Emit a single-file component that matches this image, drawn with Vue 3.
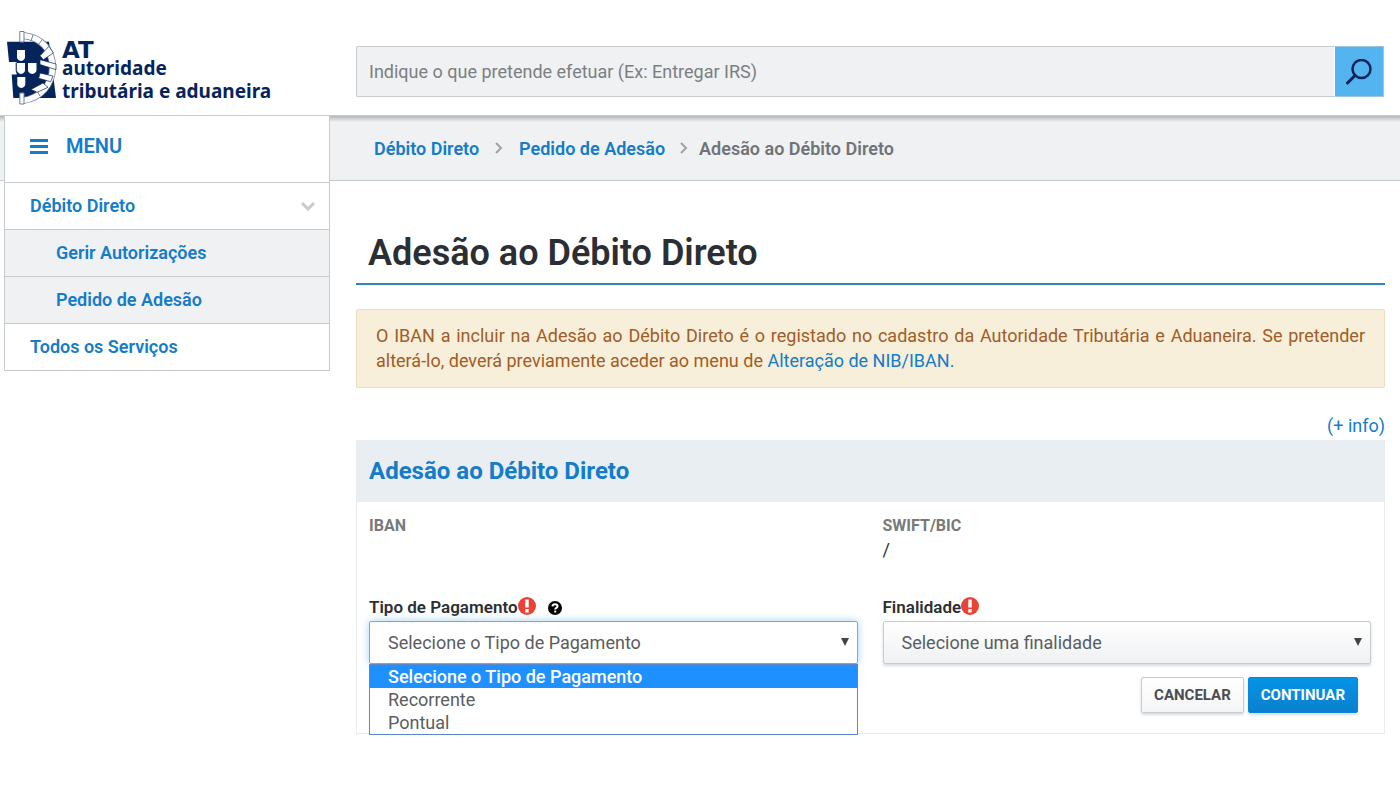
<script setup>
import { ref } from 'vue'

const query = ref('')
const paymentTypes = ['Selecione o Tipo de Pagamento', 'Recorrente', 'Pontual']
const paymentType = ref(paymentTypes[0])
const purpose = ref('Selecione uma finalidade')
const open = ref(true)

function choose(option) {
  paymentType.value = option
  open.value = false
}
</script>

<template>
  <div class="page">
    <header class="top">
      <a class="logo" href="#" aria-label="AT autoridade tributária e aduaneira">
        <svg class="emblem" viewBox="0 0 50 74" aria-hidden="true">
          <path d="M0 10.700H42L49 67H6.300L4.700 43.600H9.700V31H2Z" fill="#06245c" />
          <path d="M16 4.500C34 6 45.500 19 45.500 36S34 67 16 69.500" fill="none" stroke="#6f7fa3" stroke-width="7" />
          <path d="M16 4.500C34 6 45.500 19 45.500 36S34 67 16 69.500" fill="none" stroke="#fff" stroke-width="5.500" />
          <path d="M26 4L24 10M35 9L31 14M33 65L30 60" stroke="#6f7fa3" stroke-width="1" />
          <path d="M33 24.700L42 15.300L46.300 22L36.300 28.700ZM33 28.700L49 33V38.700L33 33.500ZM33 42L46 45L43.700 50.700L31.700 47.300ZM24 58.500L36 52L41 56.300L30 61.300Z" fill="#fff" stroke="#06245c" stroke-width="0.700" />
          <path d="M12.800 0.500H17V11H12.800ZM12.800 62H17V73H12.800Z" fill="#fff" stroke="#6f7fa3" stroke-width="1" />
          <path d="M10 19H18V26Q18 29 14 30Q10 29 10 26ZM10 32H18V39Q18 42 14 43Q10 42 10 39ZM21 32H29.500V39Q29.500 42 25.200 43Q21 42 21 39ZM10.300 46H18.300V53Q18.300 56 14.300 57Q10.300 56 10.300 53Z" fill="#fff" />
          <path d="M9.200 31.500V40Q9.500 43 13 44" fill="none" stroke="#06245c" stroke-width="1" />
        </svg>
        <span class="logo-text">
          <span class="logo-at">AT</span>
          <span>autoridade</span>
          <span class="logo-last">tributária e aduaneira</span>
        </span>
      </a>
      <form class="search" role="search" @submit.prevent>
        <input v-model="query" type="text" aria-label="Pesquisa" placeholder="Indique o que pretende efetuar (Ex: Entregar IRS)" />
        <button type="submit" aria-label="Pesquisar">
          <svg viewBox="0 0 26 26" aria-hidden="true">
            <circle cx="15.500" cy="10" r="9" fill="none" stroke="#06245c" stroke-width="2.500" />
            <path d="M9 16.500L1.500 24" stroke="#06245c" stroke-width="3" stroke-linecap="round" />
          </svg>
        </button>
      </form>
    </header>

    <div class="body">
      <div class="band">
        <nav class="crumbs" aria-label="Localização">
          <a href="#">Débito Direto</a>
          <svg viewBox="0 0 8 12" aria-hidden="true"><path d="M1 1L6 6L1 11" /></svg>
          <a href="#">Pedido de Adesão</a>
          <svg class="last" viewBox="0 0 8 12" aria-hidden="true"><path d="M1 1L6 6L1 11" /></svg>
          <span>Adesão ao Débito Direto</span>
        </nav>
      </div>

      <nav class="menu" aria-label="Menu">
        <button class="menu-head" type="button">
          <svg viewBox="0 0 18 16" aria-hidden="true"><path d="M0 1.500H18M0 7.500H18M0 13.500H18" stroke="#147cc8" stroke-width="3" /></svg>
          MENU
        </button>
        <a class="item" href="#">
          Débito Direto
          <svg viewBox="0 0 14 10" aria-hidden="true"><path d="M1 2L7 8L13 2" fill="none" stroke="#c6cbcd" stroke-width="3" /></svg>
        </a>
        <a class="item sub" href="#">Gerir Autorizações</a>
        <a class="item sub" href="#">Pedido de Adesão</a>
        <a class="item" href="#">Todos os Serviços</a>
      </nav>

      <main class="main">
        <h1>Adesão ao Débito Direto</h1>
        <p class="notice">
          O IBAN a incluir na Adesão ao Débito Direto é o registado no cadastro da Autoridade Tributária e Aduaneira. Se pretender alterá-lo, deverá previamente aceder ao menu de <a href="#">Alteração de NIB/IBAN.</a>
        </p>
        <a class="info" href="#">(+ info)</a>

        <form class="card" @submit.prevent>
          <h2>Adesão ao Débito Direto</h2>
          <div class="fields">
            <div class="fact"><span class="fact-name">IBAN</span></div>
            <div class="fact"><span class="fact-name">SWIFT/BIC</span><span>/</span></div>

            <div class="field">
              <div class="label-row">
                <label for="payment">Tipo de Pagamento</label>
                <svg class="required" viewBox="0 0 18 18" aria-hidden="true">
                  <circle cx="9" cy="9" r="9" fill="#ea4335" />
                  <path d="M7.300 2.500H10.700V10.500H7.300ZM7.300 12H10.700V15.500H7.300Z" fill="#fff" />
                </svg>
                <svg class="help" viewBox="0 0 14 14" aria-hidden="true">
                  <circle cx="7" cy="7" r="7" fill="#000" />
                  <path d="M4.500 5.300Q4.800 3.300 7 3.300Q9.500 3.300 9.500 5.300Q9.500 6.400 8.300 7Q7.200 7.500 7.200 8.600" fill="none" stroke="#fff" stroke-width="2" />
                  <path d="M6.200 9.600H8.200V11.500H6.200Z" fill="#fff" />
                </svg>
              </div>
              <div class="select-box">
                <select id="payment" v-model="paymentType" class="focused" @mousedown.prevent="open = !open">
                  <option v-for="o in paymentTypes" :key="o">{{ o }}</option>
                </select>
                <svg class="arrow" viewBox="0 0 8 8" aria-hidden="true"><path d="M0 0H8L4 8Z" fill="#444" /></svg>
                <ul v-if="open" class="options" role="listbox" aria-label="Tipo de Pagamento">
                  <li v-for="o in paymentTypes" :key="o" role="option" :aria-selected="o === paymentType" @click="choose(o)">{{ o }}</li>
                </ul>
              </div>
            </div>

            <div class="field">
              <div class="label-row">
                <label for="purpose">Finalidade</label>
                <svg class="required" viewBox="0 0 18 18" aria-hidden="true">
                  <circle cx="9" cy="9" r="9" fill="#ea4335" />
                  <path d="M7.300 2.500H10.700V10.500H7.300ZM7.300 12H10.700V15.500H7.300Z" fill="#fff" />
                </svg>
              </div>
              <div class="select-box">
                <select id="purpose" v-model="purpose">
                  <option>Selecione uma finalidade</option>
                </select>
                <svg class="arrow" viewBox="0 0 8 8" aria-hidden="true"><path d="M0 0H8L4 8Z" fill="#444" /></svg>
              </div>
            </div>
          </div>
          <div class="actions">
            <button type="button" class="btn">CANCELAR</button>
            <button type="submit" class="btn primary">CONTINUAR</button>
          </div>
        </form>
      </main>
    </div>
  </div>
</template>

<style>
body {
  background: #fff;
}
</style>

<style scoped>
.page,
.page * {
  box-sizing: border-box;
}
.page {
  font-family: Roboto, "Liberation Sans", sans-serif;
  font-size: 18px;
  line-height: 25px;
  color: #2b2f33;
}
a {
  color: #147cc8;
  text-decoration: none;
}
button,
input,
select {
  font: inherit;
}

.top {
  display: flex;
  align-items: flex-end;
  height: 116px;
  padding: 0 16px 10px 7px;
  border-bottom: 1px solid #c6cbcd;
}
.logo {
  display: flex;
  flex: none;
  width: 349px;
  color: #06245c;
}
.emblem {
  width: 50px;
  height: 74px;
}
.logo-text {
  display: flex;
  flex-direction: column;
  padding: 10px 0 0 5px;
  font-family: "Noto Sans", "Open Sans", sans-serif;
  font-size: 19px;
  font-weight: 700;
  line-height: 18px;
}
.logo-at {
  font-family: "DejaVu Sans", sans-serif;
  font-size: 23px;
}
.logo-last {
  margin-top: 5px;
}
.search {
  display: flex;
  flex: 1;
  height: 51px;
  margin-bottom: 8px;
}
.search input {
  flex: 1;
  min-width: 0;
  padding: 0 12px;
  border: 1px solid #c6cbcd;
  border-right: 0;
  border-radius: 2px 0 0 2px;
  background: #eff1f3;
  color: #444;
}
.search input::placeholder {
  color: #7b7f82;
  opacity: 1;
}
.search button {
  display: flex;
  align-items: center;
  justify-content: center;
  width: 50px;
  padding: 0;
  border: 1px solid #9cc5e0;
  border-left-color: #fff;
  background: #54b4f0;
}
.search button svg {
  width: 26px;
  height: 26px;
}

.body {
  display: grid;
  grid-template-columns: 330px minmax(0, 1fr);
  grid-template-rows: 65px auto;
}
.band {
  grid-area: 1 / 1 / 2 / 3;
  padding-left: 374px;
  border-bottom: 1px solid #c6cbcd;
  background: linear-gradient(#b4b7b9, #eff1f3 6px);
}
.crumbs {
  display: flex;
  align-items: center;
  height: 64px;
  font-weight: 600;
  color: #717477;
}
.crumbs svg {
  width: 8px;
  height: 12px;
  margin: 0 16px;
  fill: none;
  stroke: #a0a3a5;
  stroke-width: 2;
}
.crumbs .last {
  margin: 0 11px 0 15px;
}

.menu {
  grid-area: 1 / 1 / 3 / 2;
  align-self: start;
  margin: -1px 0 0 4px;
  border: 1px solid #c6cbcd;
  background: #fff;
  font-weight: 600;
}
.menu-head {
  display: flex;
  align-items: center;
  gap: 18px;
  width: 100%;
  height: 66px;
  padding: 0 25px 5px;
  border: 0;
  background: none;
  font-size: 20px;
  color: #147cc8;
}
.menu-head svg {
  width: 18px;
  height: 16px;
}
.item {
  display: flex;
  align-items: center;
  justify-content: space-between;
  height: 47px;
  padding: 0 14px 2px 25px;
  border-top: 1px solid #c6cbcd;
}
.item svg {
  width: 14px;
  height: 10px;
  margin-top: 2px;
}
.sub {
  padding-left: 51px;
  background: #eff1f3;
}

.main {
  grid-area: 2 / 2 / 3 / 3;
  display: flex;
  flex-direction: column;
  padding: 50px 15px 48px 26px;
}
h1 {
  margin: 0;
  padding: 0 12px 7px;
  border-bottom: 2px solid #2d86b8;
  font-size: 36px;
  font-weight: 600;
  line-height: 45px;
}
.notice {
  margin: 24px 0 0;
  padding: 13px 19px 14px;
  border: 1px solid #eadcc0;
  border-radius: 2px;
  background: #f7efd9;
  color: #a15c28;
  text-align: justify;
}
.info {
  align-self: flex-end;
  margin-top: 25px;
}
.card {
  margin-top: 2px;
  border: 1px solid #e8eef2;
}
h2 {
  margin: 0;
  padding: 15px 12px 16px;
  background: #e8eef2;
  font-size: 24px;
  font-weight: 700;
  line-height: 30px;
  color: #147cc8;
}
.fields {
  display: grid;
  grid-template-columns: 1fr 1fr;
  column-gap: 25px;
  padding: 12px 13px 0 12px;
}
.fact {
  display: flex;
  flex-direction: column;
  height: 80px;
  line-height: 24px;
}
.fact-name {
  font-size: 16px;
  font-weight: 700;
  color: #77797b;
}
.label-row {
  display: flex;
  align-items: center;
  height: 27px;
  font-size: 17px;
  font-weight: 600;
}
.required {
  width: 18px;
  height: 18px;
  margin-bottom: 4px;
}
.help {
  width: 14px;
  height: 14px;
  margin-left: 12px;
}
.select-box {
  position: relative;
}
select {
  display: block;
  width: 100%;
  height: 43px;
  padding: 0 32px 0 18px;
  border: 1px solid #c9cccf;
  border-radius: 2px;
  outline: none;
  appearance: none;
  background: linear-gradient(#fff, #eff1f3);
  box-shadow: 0 2px 3px #d8dadc;
  color: #5a5d60;
}
.focused {
  border-color: #66afe9;
  background: #fff;
  box-shadow: 0 0 8px #a5d2f2;
}
.arrow {
  position: absolute;
  top: 17px;
  right: 9px;
  width: 8px;
  height: 8px;
  pointer-events: none;
}
.options {
  position: absolute;
  top: 100%;
  left: 0;
  right: 0;
  margin: 0;
  padding: 0;
  border: 1px solid #5e86cc;
  background: #fff;
  list-style: none;
  line-height: 23px;
  color: #5a5d60;
}
.options li {
  padding-left: 18px;
}
.options li[aria-selected="true"] {
  background: #1e90ff;
  color: #fff;
  font-weight: 500;
}
.actions {
  display: flex;
  justify-content: flex-end;
  gap: 4px;
  padding: 13px 26px 20px;
}
.btn {
  height: 36px;
  padding: 0 12px;
  border: 1px solid #c9cccf;
  border-radius: 2px;
  background: linear-gradient(#fff, #f4f5f6);
  box-shadow: 0 2px 3px #d8dadc;
  font-size: 15px;
  font-weight: 700;
  color: #4a4d50;
}
.primary {
  border-color: #0788d8;
  background: linear-gradient(#0494e8, #0a80cc);
  color: #fff;
}
</style>
